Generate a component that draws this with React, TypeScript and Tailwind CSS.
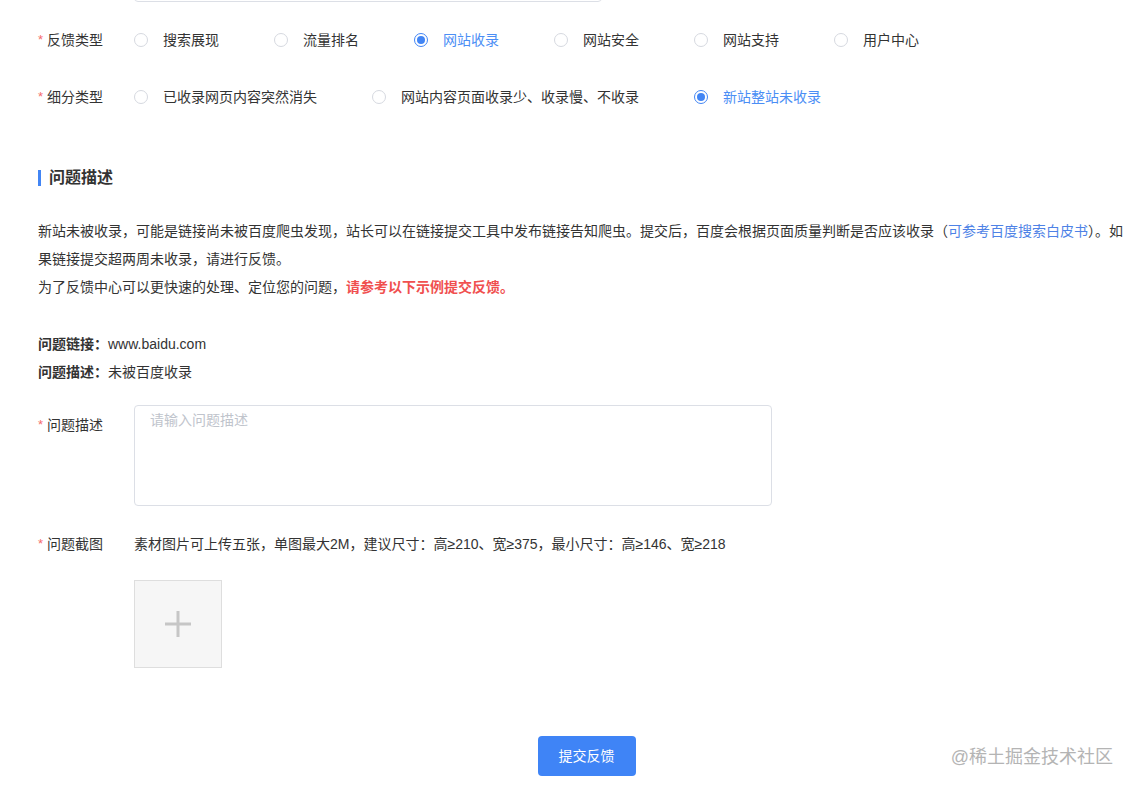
import React, { useState } from 'react';

const feedbackTypes = ['搜索展现', '流量排名', '网站收录', '网站安全', '网站支持', '用户中心'];
const subTypes = ['已收录网页内容突然消失', '网站内容页面收录少、收录慢、不收录', '新站整站未收录'];

function Label({ text, required = true }: { text: string; required?: boolean }) {
  return (
    <div className="w-[96px] shrink-0 flex items-center h-[40px] text-[14px] text-[#333]">
      {required && <span className="text-[#f56c6c] mr-[4px] text-[13px]">*</span>}
      {text}
    </div>
  );
}

function Radio({ label, checked, onClick }: { label: string; checked: boolean; onClick: () => void }) {
  return (
    <label onClick={onClick} className="flex items-center min-w-[140px] pr-[55px] h-[40px] cursor-pointer">
      <span
        className={`w-[14px] h-[14px] rounded-full border flex items-center justify-center shrink-0 ${
          checked ? 'border-[#4285f4]' : 'border-[#d6d9e0]'
        }`}
      >
        {checked && <span className="w-[8px] h-[8px] rounded-full bg-[#4285f4]" />}
      </span>
      <span className={`ml-[15px] text-[14px] whitespace-nowrap ${checked ? 'text-[#4b8ef5]' : 'text-[#333]'}`}>
        {label}
      </span>
    </label>
  );
}

export default function App() {
  const [type, setType] = useState('网站收录');
  const [sub, setSub] = useState('新站整站未收录');
  const [desc, setDesc] = useState('');

  return (
    <div className="relative w-full min-h-[790px] bg-white overflow-hidden pl-[38px] font-['Liberation_Sans','Noto_Sans_CJK_SC',sans-serif] text-[#333]">
      {/* tail of the field above */}
      <div className="ml-[96px] mt-[-38px] w-[468px] h-[40px] border border-[#dcdfe6] rounded-[4px]" />

      <div className="flex mt-[18px]">
        <Label text="反馈类型" />
        <div className="flex">
          {feedbackTypes.map((t) => (
            <Radio key={t} label={t} checked={type === t} onClick={() => setType(t)} />
          ))}
        </div>
      </div>

      <div className="flex mt-[17px]">
        <Label text="细分类型" />
        <div className="flex">
          {subTypes.map((t) => (
            <Radio key={t} label={t} checked={sub === t} onClick={() => setSub(t)} />
          ))}
        </div>
      </div>

      <div className="flex items-center mt-[50px] h-[22px]">
        <span className="w-[3px] h-[16px] bg-[#4285f4] mr-[8px]" />
        <span className="text-[16px] font-semibold text-[#333]">问题描述</span>
      </div>

      <div className="mt-[28px] text-[14px] leading-[28px] text-[#333]">
        <p>
          新站未被收录，可能是链接尚未被百度爬虫发现，站长可以在链接提交工具中发布链接告知爬虫。提交后，百度会根据页面质量判断是否应该收录（
          <a className="text-[#4e82e6] cursor-pointer">可参考百度搜索白皮书</a>
          ）。如果链接提交超两周未收录，请进行反馈。
        </p>
        <p>
          为了反馈中心可以更快速的处理、定位您的问题，
          <span className="text-[#f0504f] font-bold">请参考以下示例提交反馈。</span>
        </p>
      </div>

      <div className="mt-[29px] text-[14px] leading-[28px] text-[#333]">
        <p>
          <span className="font-bold">问题链接：</span>www.baidu.com
        </p>
        <p>
          <span className="font-bold">问题描述：</span>未被百度收录
        </p>
      </div>

      <div className="flex mt-[19px]">
        <Label text="问题描述" />
        <textarea
          value={desc}
          onChange={(e) => setDesc(e.target.value)}
          placeholder="请输入问题描述"
          className="w-[638px] h-[101px] border border-[#dcdfe6] rounded-[4px] px-[15px] pt-[4px] text-[14px] leading-[20px] resize-none outline-none placeholder:text-[#c0c4cc]"
        />
      </div>

      <div className="flex mt-[18px]">
        <Label text="问题截图" />
        <div>
          <p className="h-[40px] leading-[40px] text-[14px] text-[#333] whitespace-nowrap">
            素材图片可上传五张，单图最大2M，建议尺寸：高≥210、宽≥375，最小尺寸：高≥146、宽≥218
          </p>
          <div className="mt-[16px] w-[88px] h-[88px] bg-[#f6f6f6] border border-[#dedede] flex items-center justify-center cursor-pointer">
            <svg width="28" height="28" viewBox="0 0 28 28">
              <rect x="12.5" y="1" width="3" height="26" fill="#c6c6c6" />
              <rect x="1" y="12.5" width="26" height="3" fill="#c6c6c6" />
            </svg>
          </div>
        </div>
      </div>

      <div className="relative flex justify-center mt-[68px] pb-[14px]">
        <button className="w-[98px] h-[40px] rounded-[4px] bg-[#3f84f6] text-white text-[14px]">提交反馈</button>
        <span className="absolute right-[22px] top-[9px] text-[18px] leading-[24px] text-[#b4b4b4] [text-shadow:0_0_2px_#fff]">
          @稀土掘金技术社区
        </span>
      </div>
    </div>
  );
}
